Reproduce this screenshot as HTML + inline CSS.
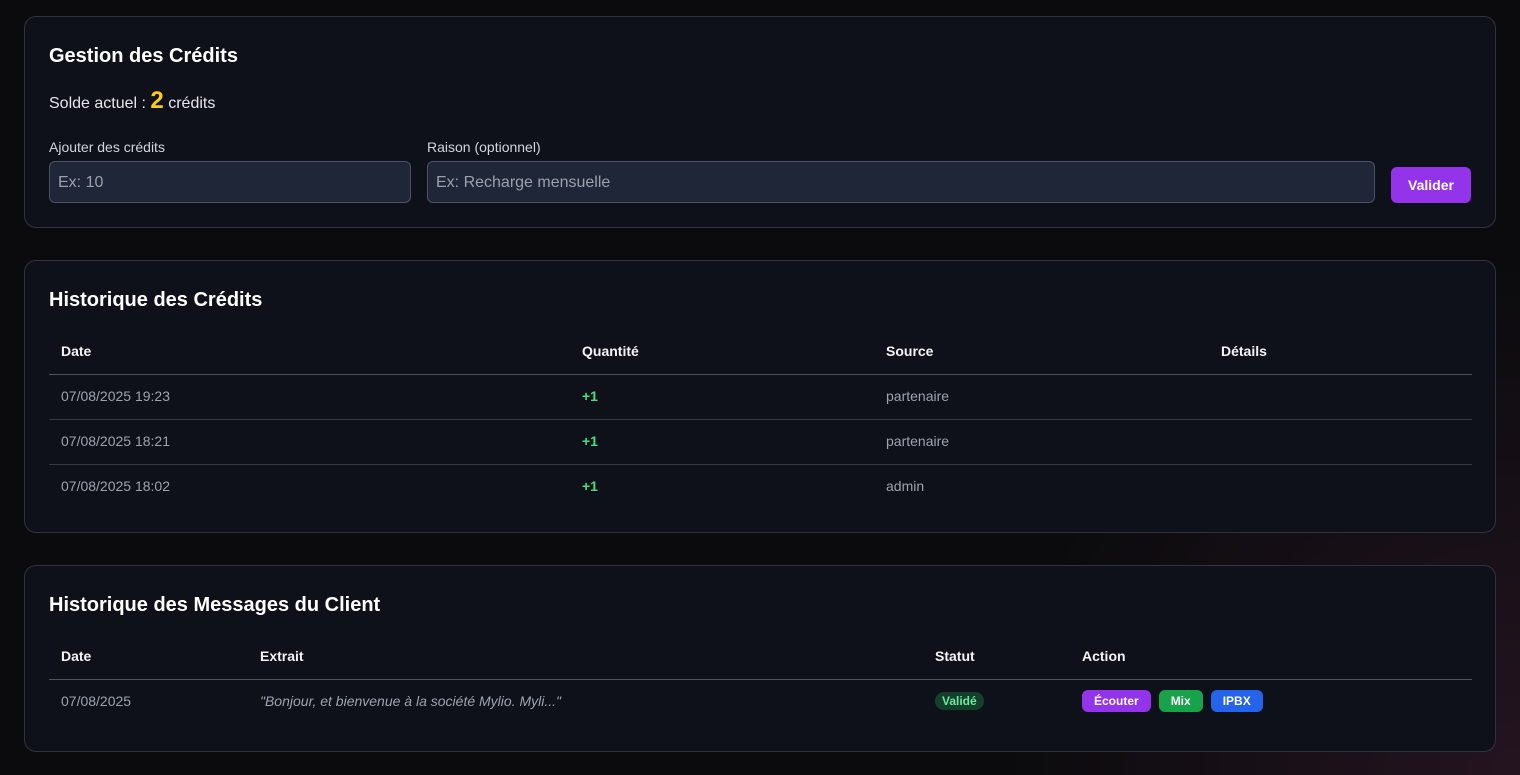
<!DOCTYPE html>
<html><head><meta charset="utf-8"><style>
*{box-sizing:border-box;margin:0;padding:0}
body{width:1520px;height:775px;overflow:hidden;background:radial-gradient(circle at 100% 100%,#241420 0,#0b0b0d 30%),#0b0b0d;font-family:"Liberation Sans",sans-serif;color:#e5e7eb}
.card{position:absolute;left:24px;width:1472px;background:#0f111a;border:1px solid #2f3341;border-radius:12px}
h2{position:absolute;left:24px;font-size:20px;font-weight:bold;color:#fff}
.abs{position:absolute}
.lbl{font-size:14px;color:#d1d5db}
.inp{position:absolute;top:144px;height:42px;background:#1f2637;border:1px solid #4a5263;border-radius:6px;color:#9aa1ad;font-size:16px;padding:12px 8px}
table{position:absolute;left:24px;width:1423px;border-collapse:collapse;font-size:14px}
th{text-align:left;color:#f3f4f6;font-weight:bold;padding:0 12px;height:46px;border-bottom:1px solid #4b5260}
td{padding:0 12px 2px;height:45px;color:#9ca3af;border-bottom:1px solid #353a47}
tr:last-child td{border-bottom:none}
.g{color:#4ade80;font-weight:bold}
.b{display:inline-block;color:#fff;font-size:12px;font-weight:bold;padding:4px 12px;border-radius:6px;margin-right:8px}
</style></head><body>
<div class="card" style="top:16px;height:212px">
<h2 style="top:28px">Gestion des Crédits</h2>
<div class="abs" style="left:24px;top:70px;font-size:16px;color:#e5e7eb">Solde actuel : <span style="color:#facc15;font-size:24px;font-weight:bold">2</span> crédits</div>
<div class="abs lbl" style="left:24px;top:122px">Ajouter des crédits</div>
<div class="abs lbl" style="left:402px;top:122px">Raison (optionnel)</div>
<div class="inp" style="left:24px;width:362px">Ex: 10</div>
<div class="inp" style="left:402px;width:948px">Ex: Recharge mensuelle</div>
<div class="abs" style="left:1366px;top:150px;width:80px;height:36px;background:#9333ea;border-radius:6px;color:#fff;font-weight:bold;font-size:14px;text-align:center;line-height:36px">Valider</div>
</div>
<div class="card" style="top:260px;height:273px">
<h2 style="top:28px">Historique des Crédits</h2>
<table style="top:67px"><tr><th style="width:521px">Date</th><th style="width:304px">Quantité</th><th style="width:335px">Source</th><th>Détails</th></tr>
<tr><td>07/08/2025 19:23</td><td class="g">+1</td><td>partenaire</td><td></td></tr>
<tr><td>07/08/2025 18:21</td><td class="g">+1</td><td>partenaire</td><td></td></tr>
<tr><td>07/08/2025 18:02</td><td class="g">+1</td><td>admin</td><td></td></tr></table>
</div>
<div class="card" style="top:565px;height:187px">
<h2 style="top:28px">Historique des Messages du Client</h2>
<table style="top:67px"><tr><th style="width:199px">Date</th><th style="width:675px">Extrait</th><th style="width:147px">Statut</th><th>Action</th></tr>
<tr><td>07/08/2025</td><td style="font-style:italic">"Bonjour, et bienvenue à la société Mylio. Myli..."</td><td><span style="display:inline-block;background:#14402a;color:#6ee7a0;font-size:12px;font-weight:bold;padding:2px 7px;border-radius:10px">Validé</span></td><td><span class="b" style="background:#9333ea">Écouter</span><span class="b" style="background:#16a34a">Mix</span><span class="b" style="background:#2563eb">IPBX</span></td></tr></table>
</div>
</body></html>
